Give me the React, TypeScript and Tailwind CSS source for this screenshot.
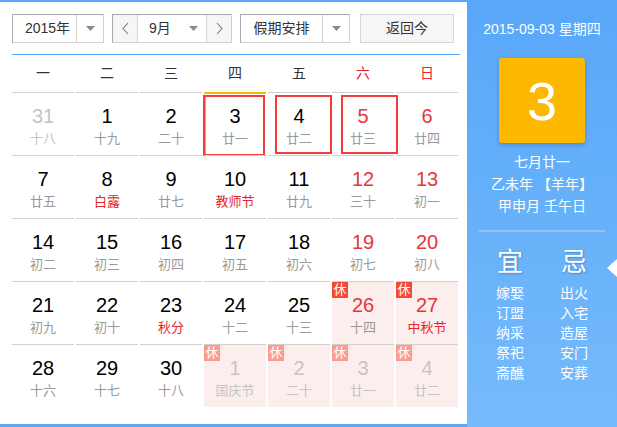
type Day = {
  n: number;
  lunar: string;
  other?: boolean;
  fest?: boolean;
  rest?: boolean;
  mark?: "today" | "box4" | "box5";
};

const rows: Day[][] = [
  [
    { n: 31, lunar: "十八", other: true },
    { n: 1, lunar: "十九" },
    { n: 2, lunar: "二十" },
    { n: 3, lunar: "廿一", mark: "today" },
    { n: 4, lunar: "廿二", mark: "box4" },
    { n: 5, lunar: "廿三", mark: "box5" },
    { n: 6, lunar: "廿四" },
  ],
  [
    { n: 7, lunar: "廿五" },
    { n: 8, lunar: "白露", fest: true },
    { n: 9, lunar: "廿七" },
    { n: 10, lunar: "教师节", fest: true },
    { n: 11, lunar: "廿九" },
    { n: 12, lunar: "三十" },
    { n: 13, lunar: "初一" },
  ],
  [
    { n: 14, lunar: "初二" },
    { n: 15, lunar: "初三" },
    { n: 16, lunar: "初四" },
    { n: 17, lunar: "初五" },
    { n: 18, lunar: "初六" },
    { n: 19, lunar: "初七" },
    { n: 20, lunar: "初八" },
  ],
  [
    { n: 21, lunar: "初九" },
    { n: 22, lunar: "初十" },
    { n: 23, lunar: "秋分", fest: true },
    { n: 24, lunar: "十二" },
    { n: 25, lunar: "十三" },
    { n: 26, lunar: "十四", rest: true },
    { n: 27, lunar: "中秋节", fest: true, rest: true },
  ],
  [
    { n: 28, lunar: "十六" },
    { n: 29, lunar: "十七" },
    { n: 30, lunar: "十八" },
    { n: 1, lunar: "国庆节", other: true, rest: true },
    { n: 2, lunar: "二十", other: true, rest: true },
    { n: 3, lunar: "廿一", other: true, rest: true },
    { n: 4, lunar: "廿二", other: true, rest: true },
  ],
];

const weekdays = ["一", "二", "三", "四", "五", "六", "日"];
const yi = ["嫁娶", "订盟", "纳采", "祭祀", "斋醮"];
const ji = ["出火", "入宅", "造屋", "安门", "安葬"];

function Caret() {
  return (
    <svg width="9" height="5" viewBox="0 0 9 5">
      <path d="M0 0h9L4.5 5z" fill="#8a8a8a" />
    </svg>
  );
}

function Chevron({ dir }: { dir: "l" | "r" }) {
  return (
    <svg width="7" height="13" viewBox="0 0 7 13">
      <path
        d={dir === "l" ? "M6 1L1 6.5 6 12" : "M1 1l5 5.5L1 12"}
        fill="none"
        stroke="#777"
        strokeWidth="1.1"
      />
    </svg>
  );
}

function Cell({ d, col }: { d: Day; col: number }) {
  const weekend = col >= 5;
  const numColor = d.other
    ? "text-[#c4c4c4]"
    : weekend
      ? "text-[#e8343c]"
      : "text-black";
  const lunarColor = d.other
    ? "text-[#c4c4c4]"
    : d.fest
      ? "text-[#e3262b]"
      : "text-[#999]";

  return (
    <div
      className={`relative h-[63px] border-t text-center ${
        d.mark === "today" ? "border-[#fbb800]" : "border-[#d0d0d0]"
      } ${d.rest ? "bg-[#fdeeee]" : ""}`}
    >
      {d.rest && (
        <span
          className={`absolute left-0 top-0 h-[16px] w-[16px] text-[13px] leading-[16px] text-white ${
            d.other ? "bg-[#fb9b90]" : "bg-[#f54a36]"
          }`}
        >
          休
        </span>
      )}
      <div className={`pt-[11px] text-[20px] leading-[24px] ${numColor}`}>
        {d.n}
      </div>
      <div className={`mt-[2px] text-[13px] leading-[18px] ${lunarColor}`}>
        {d.lunar}
      </div>
      {d.mark === "today" && (
        <>
          <span className="absolute left-0 right-0 top-0 h-px bg-[#fbb800]" />
          <span className="absolute -left-px top-[2px] h-[61px] w-[62px] border-2 border-[#f43c3c] shadow-[inset_1px_0_0_#fbb800]" />
        </>
      )}
      {d.mark === "box4" && (
        <span className="absolute left-[7px] top-[2px] h-[59px] w-[57px] border-2 border-[#f43c3c]" />
      )}
      {d.mark === "box5" && (
        <span className="absolute left-[9px] top-[2px] h-[59px] w-[57px] border-2 border-[#f43c3c]" />
      )}
    </div>
  );
}

export default function App() {
  return (
    <div
      className="flex h-[427px] w-[617px] overflow-hidden bg-white"
      style={{ fontFamily: '"Liberation Sans", "Noto Sans CJK SC", sans-serif' }}
    >
      <div className="flex h-full w-[467px] flex-col border-t-2 border-b-[3px] border-[#5aa8f8] pl-3 pt-3">
        <div className="flex h-[29px] items-stretch text-[14px] text-[#333]">
          <div className="flex w-[92px] border border-[#a9a9a9] border-b-[#d0d0d0] border-r-[#d0d0d0]">
            <div className="flex w-[63px] items-center justify-center pl-[6px]">
              2015年
            </div>
            <div className="flex flex-1 items-center justify-center border-l border-[#d4d4d4]">
              <Caret />
            </div>
          </div>

          <div className="ml-2 flex w-[120px] border border-[#a9a9a9] border-b-[#d0d0d0] border-r-[#d0d0d0]">
            <div className="flex w-[24px] items-center justify-center bg-[#f6f6f6]">
              <Chevron dir="l" />
            </div>
            <div className="flex w-[70px] items-center border-x border-[#d4d4d4] pl-[11px]">
              <span>9月</span>
              <span className="ml-[18px] flex">
                <Caret />
              </span>
            </div>
            <div className="flex flex-1 items-center justify-center bg-[#f6f6f6]">
              <Chevron dir="r" />
            </div>
          </div>

          <div className="ml-2 flex w-[110px] border border-[#a9a9a9] border-b-[#d0d0d0] border-r-[#d0d0d0]">
            <div className="flex w-[81px] items-center justify-center">
              假期安排
            </div>
            <div className="flex flex-1 items-center justify-center border-l border-[#d4d4d4]">
              <Caret />
            </div>
          </div>

          <button className="ml-[10px] w-[94px] border border-[#d4d4d4] bg-[#f6f6f6] text-[14px] text-[#333]">
            返回今
          </button>
        </div>

        <div className="mt-[11px] h-px w-[448px] bg-[#5aa8f8]" />

        <div className="grid h-[37px] w-[446px] grid-cols-[repeat(7,62px)] items-center gap-x-[2px] text-center text-[14px]">
          {weekdays.map((w, i) => (
            <div key={w} className={i >= 5 ? "text-[#e3262b]" : "text-[#333]"}>
              {w}
            </div>
          ))}
        </div>

        <div className="grid w-[446px] grid-cols-[repeat(7,62px)] gap-x-[2px]">
          {rows.map((row, r) =>
            row.map((d, c) => <Cell key={`${r}-${c}`} d={d} col={c} />),
          )}
        </div>
      </div>

      <div className="relative flex h-full w-[150px] flex-col items-center bg-gradient-to-b from-[#58a7f8] to-[#75bafc] text-white">
        <div className="pt-[19px] text-[14px] leading-[20px]">
          2015-09-03 星期四
        </div>
        <div className="mt-[19px] flex h-[85px] w-[86px] items-center justify-center rounded-[3px] bg-[#fdb900] text-[54px] leading-none shadow-[0_2px_4px_rgba(0,0,0,0.2)]">
          3
        </div>
        <div className="mt-[8px] text-center text-[14px] leading-[22px]">
          <div>七月廿一</div>
          <div>乙未年 【羊年】</div>
          <div>甲申月 壬午日</div>
        </div>
        <div className="mt-[13px] h-[2px] w-[126px] bg-[#8ec5fb]" />
        <div className="mt-[15px] flex w-[128px]">
          {[
            { t: "宜", items: yi },
            { t: "忌", items: ji },
          ].map((g) => (
            <div key={g.t} className="flex w-[64px] flex-col items-center">
              <div className="text-[26px] leading-[30px] [text-shadow:1px_1px_2px_rgba(0,0,0,0.25)]">
                {g.t}
              </div>
              <div className="mt-[6px] text-center text-[14px] leading-[20px]">
                {g.items.map((it) => (
                  <div key={it}>{it}</div>
                ))}
              </div>
            </div>
          ))}
        </div>
        <svg
          className="absolute right-0 top-[259px]"
          width="10"
          height="18"
          viewBox="0 0 10 18"
        >
          <path d="M10 0v18L0 9z" fill="#fff" />
        </svg>
      </div>
    </div>
  );
}
